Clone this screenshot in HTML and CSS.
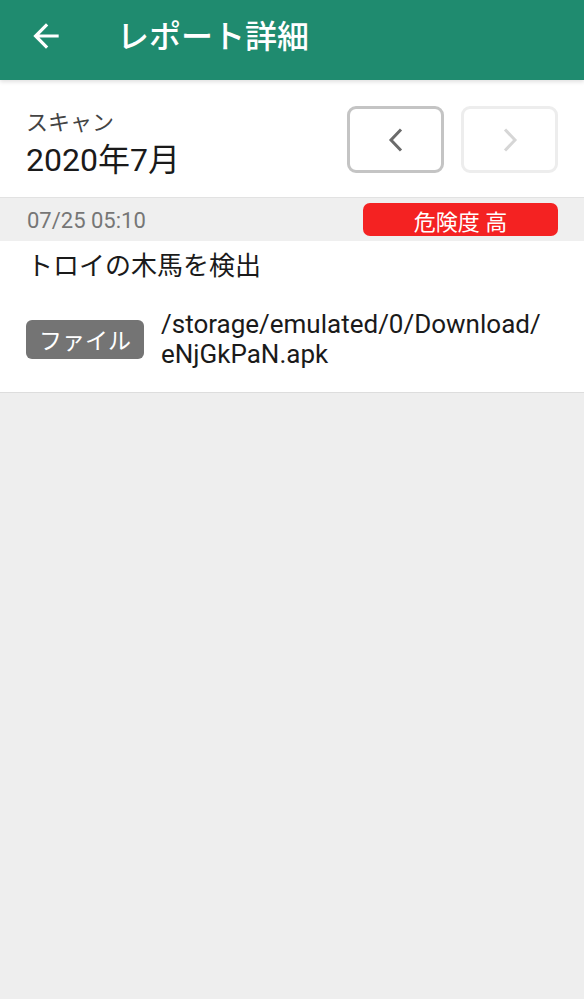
FILE: index.html
```html
<!DOCTYPE html>
<html lang="ja">
<head>
<meta charset="utf-8">
<title>レポート詳細</title>
<link rel="stylesheet" href="styles.css">
</head>
<body>
<header class="appbar">
  <svg class="back" viewBox="0 0 24 24" width="38" height="38" aria-hidden="true">
    <path d="M20 11H7.83l5.59-5.59L12 4l-8 8 8 8 1.41-1.41L7.83 13H20v-2z" fill="#fff"/>
  </svg>
  <h1 class="title">レポート詳細</h1>
</header>
<section class="scan">
  <div class="scan-text">
    <div class="scan-label">スキャン</div>
    <div class="scan-month">2020年7月</div>
  </div>
  <div class="nav">
    <button class="navbtn prev" type="button" aria-label="前へ">
      <svg viewBox="0 0 24 30" width="24" height="30"><path d="M17 4.5L7 15l10 10.5" fill="none" stroke="#6b6b6b" stroke-width="3"/></svg>
    </button>
    <button class="navbtn next" type="button" aria-label="次へ">
      <svg viewBox="0 0 24 30" width="24" height="30"><path d="M7 4.5L17 15 7 25.5" fill="none" stroke="#d6d6d6" stroke-width="3"/></svg>
    </button>
  </div>
</section>
<div class="daterow">
  <span class="date">07/25 05:10</span>
  <span class="badge">危険度 高</span>
</div>
<section class="detail">
  <div class="detail-title">トロイの木馬を検出</div>
  <div class="filerow">
    <span class="tag">ファイル</span>
    <span class="path">/storage/emulated/0/Download/<br>eNjGkPaN.apk</span>
  </div>
</section>
</body>
</html>
```
FILE: styles.css
```css
html, body {
  margin: 0;
  padding: 0;
  background: #eeeeee;
  font-family: Roboto, "Noto Sans CJK JP", sans-serif;
  color: #212121;
}
.appbar {
  height: 80px;
  background: #1f8b6f;
  display: flex;
  align-items: center;
  padding-left: 27px;
  box-shadow: 0 2px 4px rgba(0,0,0,0.12);
  position: relative;
  z-index: 1;
}
.back { display: block; margin-top: -9px; }
.title {
  margin: -6px 0 0 52px;
  font-size: 32px;
  font-weight: 500;
  color: #fff;
  line-height: 1;
}
.scan {
  background: #fff;
  height: 117px;
  display: flex;
  align-items: center;
  justify-content: space-between;
  padding: 0 26px 0 26px;
  border-bottom: 1px solid #e2e2e2;
}
.scan-text { display: flex; flex-direction: column; margin-top: 13px; }
.scan-label { font-size: 22px; color: #444; line-height: 30px; }
.scan-month { font-size: 32px; color: #1a1a1a; line-height: 44px; }
.nav { display: flex; gap: 17px; margin-top: 2px; }
.navbtn {
  width: 97px;
  height: 67px;
  background: #fff;
  border-radius: 9px;
  display: flex;
  align-items: center;
  justify-content: center;
  padding: 0;
}
.navbtn svg { display: block; }
.prev { border: 3px solid #c4c4c4; }
.next { border: 3px solid #ededed; }
.daterow {
  height: 43px;
  background: #efefef;
  display: flex;
  align-items: center;
  justify-content: space-between;
  padding: 0 26px 0 27px;
}
.date { font-size: 22px; color: #767676; margin-top: 2px; }
.badge {
  width: 195px;
  height: 33px;
  background: #f42222;
  border-radius: 7px;
  color: #fff;
  font-size: 22px;
  display: flex;
  align-items: center;
  justify-content: center;
}
.detail {
  background: #fff;
  padding: 8px 26px 23px 27px;
  border-bottom: 1px solid #dddddd;
}
.detail-title { font-size: 26px; color: #1a1a1a; line-height: 34px; }
.filerow {
  display: flex;
  align-items: center;
  gap: 17px;
  margin-top: 26px;
}
.tag {
  background: #747474;
  color: #fff;
  font-size: 23px;
  border-radius: 6px;
  padding: 0 13px;
  height: 39px;
  display: flex;
  align-items: center;
  margin-left: -1px;
}
.path { font-size: 26px; line-height: 30px; color: #1a1a1a; }
```
